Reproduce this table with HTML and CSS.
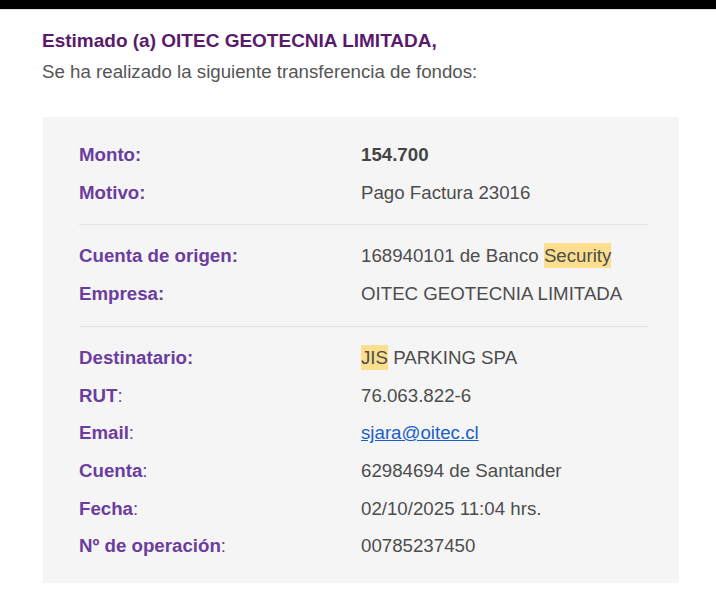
FILE: index.html
```html
<!DOCTYPE html>
<html>
<head>
    <title>Transferencia de fondos</title>
    <link rel="stylesheet" href="styles.css">
</head>
<body>
    <div class="topbar"></div>
    <div class="mail">
        <h2 class="greeting">Estimado (a) OITEC GEOTECNIA LIMITADA,</h2>
        <p class="intro">Se ha realizado la siguiente transferencia de fondos:</p>

        <div class="details">
            <div class="section">
                <div class="label">Monto:</div>
                <div class="value strong">154.700</div>
                <div class="label">Motivo:</div>
                <div class="value">Pago Factura 23016</div>
            </div>
            <div class="section">
                <div class="label">Cuenta de origen:</div>
                <div class="value">168940101 de Banco <span class="hl">Security</span></div>
                <div class="label">Empresa:</div>
                <div class="value">OITEC GEOTECNIA LIMITADA</div>
            </div>
            <div class="section">
                <div class="label">Destinatario:</div>
                <div class="value"><span class="hl">JIS</span> PARKING SPA</div>
                <div class="label">RUT<span class="colon">:</span></div>
                <div class="value">76.063.822-6</div>
                <div class="label">Email<span class="colon">:</span></div>
                <div class="value"><a href="#">sjara@oitec.cl</a></div>
                <div class="label">Cuenta<span class="colon">:</span></div>
                <div class="value">62984694 de Santander</div>
                <div class="label">Fecha<span class="colon">:</span></div>
                <div class="value">02/10/2025 11:04 hrs.</div>
                <div class="label">Nº de operación<span class="colon">:</span></div>
                <div class="value">00785237450</div>
            </div>
        </div>
    </div>
</body>
</html>
```

FILE: styles.css
```css
body {
    margin: 0;
    background: #ffffff;
    font-family: "Liberation Sans", Arial, sans-serif;
    font-size: 18.7px;
}
.topbar {
    height: 9px;
    background: #000000;
    border-bottom: 1px solid #e2e2e2;
}
.mail {
    padding: 18px 0 0 42px;
}
.greeting {
    margin: 0;
    font-size: 19px;
    line-height: 26px;
    color: #5a1a6c;
}
.intro {
    margin: 5px 0 0 0;
    line-height: 26px;
    color: #555555;
}
.details {
    margin: 32px 0 0 1px;
    width: 636px;
    box-sizing: border-box;
    padding: 19px 31px 18px 36px;
    background: #f5f5f5;
}
.section {
    display: grid;
    grid-template-columns: 282px 1fr;
    line-height: 37.7px;
}
.section + .section {
    border-top: 1px solid #e4e4e4;
    margin-top: 13px; /* Spacing above the divider */
    padding-top: 12px;
}
.label {
    font-weight: bold;
    color: #6b3d9e;
}
.colon {
    font-weight: normal;
}
.value {
    color: #4d4d4d;
}
.strong {
    font-weight: bold;
    color: #444444;
}
.hl {
    background: #fbdf8e;
    padding: 2px 0;
}
.value a {
    color: #1a5fc8;
}
```
